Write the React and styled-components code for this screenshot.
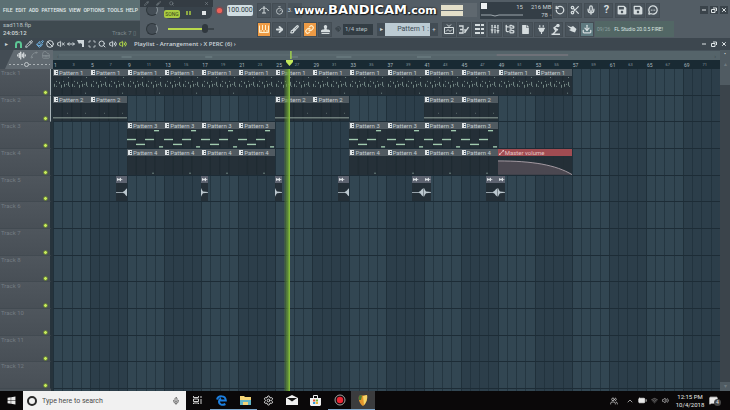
import React from 'react'
import styled, { createGlobalStyle } from 'styled-components'
import {
  ArrowRight, AudioLines, Ban, BatteryMedium, Brush, ChevronUp, Download, FolderTree,
  Link, Magnet, MessageCircleMore, MessageSquare, Mic, MoveHorizontal, Paintbrush, Pencil,
  Piano, RotateCcw, Scan, Scissors, Search, Settings, SlidersVertical, Spline,
  Timer, Users, Volume2, VolumeX, Wifi, X,
} from 'lucide-react'
import { FaFile, FaPlug, FaSave, FaStamp, FaWindows } from 'react-icons/fa'

const BARS = 72
const every = (from, to) => {
  const list = []
  for (let bar = from; bar <= to; bar += 4) list.push(bar)
  return list
}
const patterns = (name, type, bars) => bars.map((bar) => ({ name, type, bar, length: 4 }))
const fadeIn = (bar) => ({ type: 'fadeIn', bar, length: 1.25 })
const fadeOut = (bar) => ({ type: 'fadeOut', bar, length: 0.75 })

const tracks = [
  patterns('Pattern 1', 'hats', every(1, 53)),
  patterns('Pattern 2', 'line', [1, 5, 25, 29, 41, 45]),
  patterns('Pattern 3', 'notes', [...every(9, 21), ...every(33, 45)]),
  [
    ...patterns('Pattern 4', 'kick', [...every(9, 21), ...every(33, 45)]),
    { name: 'Master volume', type: 'automation', bar: 49, length: 8 },
  ],
  [fadeIn(7.75), fadeOut(17), fadeOut(25), fadeIn(31.75), fadeIn(39.75), fadeOut(41), fadeIn(47.75), fadeOut(49)],
  [], [], [], [], [], [], [],
]

const menus = ['FILE', 'EDIT', 'ADD', 'PATTERNS', 'VIEW', 'OPTIONS', 'TOOLS', 'HELP']

const GlobalStyle = createGlobalStyle`
  * { box-sizing: border-box; }
  body {
    margin: 0;
    background: #2d404a;
    font-family: Roboto, 'Liberation Sans', sans-serif;
    font-size: 6px;
    line-height: 8px;
    color: #d3dadc;
  }
  button, input, select {
    margin: 0;
    padding: 0;
    border: 0;
    background: none;
    color: inherit;
    font: inherit;
  }
  svg { display: block; flex: none; }
`

const Page = styled.div`
  display: flex;
  flex-direction: column;
  min-height: 100vh;
`

const Toolbar = styled.header`
  position: relative;
  background: #535d65;
`

const Row = styled.div`
  display: flex;
  align-items: center;
  height: ${(p) => p.$height}px;
`

const MenuBar = styled.nav`
  display: flex;
  align-items: center;
  justify-content: space-between;
  align-self: stretch;
  width: 140px;
  padding: 0 2px 0 3px;
  background: #5c7073;
  font-size: 5px;
  font-weight: 500;
  color: #e2ebeb;
`

const HintPanel = styled.div`
  display: flex;
  justify-content: space-between;
  align-items: flex-end;
  width: 140px;
  height: 17px;
  padding: 0 4px 1px 3px;
  background: #3f4a50;
  color: #b9c2c5;
  span { color: #7b878b; }
  p { margin: 0; }
  b { font-weight: 500; color: #d3dadc; }
`

const KnobCell = styled.div`
  display: grid;
  place-items: center;
  width: 24px;
`

const Knob = styled.div`
  width: 12px;
  height: 12px;
  border: 1px solid #2e363c;
  border-right-color: #8a949a;
  border-radius: 50%;
  background: #444d55;
`

const SongPanel = styled.div`
  display: grid;
  grid-template-columns: repeat(3, 1fr);
  align-items: end;
  justify-items: center;
  width: 48px;
  height: 17px;
  padding-bottom: 1px;
  border-radius: 0 0 6px 6px;
  background: #38424a;
`

const SongButton = styled.button`
  height: 8px;
  padding: 0 1px;
  border-radius: 2px;
  background: #a9cb42;
  color: #35431a;
  font-size: 5px;
`

const PlainButton = styled.button`
  display: grid;
  place-items: center;
  min-width: ${(p) => p.$width || 0}px;
  color: ${(p) => p.$color || 'inherit'};
`

const Tempo = styled.input`
  width: 26px;
  height: 11px;
  margin: 0 3px 0 1px;
  border-radius: 2px;
  background: #d0dde2;
  color: #2c3940;
  font-size: 7px;
  text-align: center;
`

const Volume = styled.input.attrs({ type: 'range' })`
  appearance: none;
  width: 46px;
  height: 10px;
  margin: 0 42px 0 4px;
  &::-webkit-slider-runnable-track {
    height: 2px;
    background: linear-gradient(90deg, #b9d94c 84%, #3b444a 84%);
  }
  &::-webkit-slider-thumb {
    appearance: none;
    width: 6px;
    height: 9px;
    margin-top: -4px;
    border-radius: 3px;
    background: #30383e;
  }
`

const ButtonGroup = styled.div`
  display: grid;
  grid-template-columns: repeat(${(p) => p.$count}, 1fr);
  justify-items: center;
  width: ${(p) => p.$width}px;
`

const ToolButton = styled.button`
  display: grid;
  place-items: center;
  width: 14px;
  height: 15px;
  border: 1px solid #444d54;
  background: ${(p) => (p.$on ? '#ee9b45' : p.$teal ? '#5f7a80' : '#49535b')};
  color: ${(p) => (p.$on ? '#fff0cd' : '#d5dcde')};
`

const Countdown = styled.button`
  width: 14px;
  height: 15px;
  background: #49535b;
  text-align: left;
`

const HelpMark = styled.b`
  font-size: 11px;
`

const Meter = styled.div`
  display: grid;
  gap: 1px;
  align-content: center;
  width: 36px;
  height: 14px;
  margin-right: 3px;
  background: #5f686f;
  div { height: 5px; width: 62%; background: #e3dfc9; }
`

const Cpu = styled.div`
  display: grid;
  grid-template-columns: 1fr auto;
  width: 72px;
  height: 17px;
  padding: 1px 3px 0 1px;
  background: #343e46;
  text-align: right;
  white-space: nowrap;
  color: #c9d1d4;
`

const CpuGraph = styled.div`
  display: grid;
  grid-template-columns: 6px 1fr;
  padding-right: 8px;
  svg { grid-column: 1 / -1; }
`

const CpuBox = styled.div`
  height: 6px;
  background: #eef1f2;
`

const WindowButtons = styled.div`
  display: flex;
  gap: 2px;
  margin-left: auto;
  padding-right: 2px;
  color: #dfe5e7;
`

const WindowButton = styled.button`
  display: grid;
  place-items: center;
  width: 8px;
  height: 8px;
  background: ${(p) => (p.$flat ? 'none' : '#3a434a')};
`

const StepSelect = styled.select`
  appearance: none;
  width: 30px;
  height: 11px;
  margin-right: 4px;
  padding-left: 2px;
  background: #333d44;
  color: #b7c0c4;
`

const PatternPicker = styled.div`
  display: flex;
  width: 61px;
  height: 13px;
  margin-right: 3px;
  background: #424c54;
`

const PatternName = styled.button`
  flex: 1;
  padding-right: 1px;
  background: #bccbd3;
  color: #3b4a54;
  font-size: 7px;
  text-align: right;
`

const News = styled.div`
  display: flex;
  align-items: center;
  gap: 4px;
  width: 79px;
  height: 16px;
  padding: 0 2px;
  background: #526765;
  font-size: 5px;
  white-space: nowrap;
  color: #dbe6e2;
  span { color: #8fa1a2; }
`

const CaptureBar = styled.div`
  position: absolute;
  top: 0;
  left: 140px;
  display: flex;
  justify-content: space-around;
  align-items: center;
  width: 73px;
  height: 7px;
  background: #343c43;
  color: #949da2;
`

const Watermark = styled.div`
  position: absolute;
  top: 3px;
  left: 294px;
  font-family: 'DejaVu Sans', sans-serif;
  font-weight: bold;
  font-size: 11px;
  line-height: 13px;
  color: #fff;
  text-shadow: 0 0 2px #000, 1px 1px 1px #1c2226;
  b { font-size: 13px; }
`

const TitleBar = styled.div`
  display: flex;
  align-items: center;
  height: 12px;
  background: #3d474f;
  color: #ced6da;
`

const Tools = styled.div`
  display: grid;
  grid-template-columns: repeat(${(p) => p.$count}, 1fr);
  justify-items: center;
  width: ${(p) => p.$width}px;
`

const Title = styled.h1`
  margin: 0 0 0 6px;
  font: inherit;
  font-family: 'Open Sans', sans-serif;
  font-weight: 600;
`

const Playlist = styled.main`
  flex: 1;
  display: grid;
  grid-template-columns: 53px 1fr 10px;
  grid-template-rows: 10px 9px 1fr;
`

const Corner = styled.div`
  grid-row: span 2;
  display: grid;
  grid-template-rows: 10px 9px;
  align-items: center;
  background: linear-gradient(115deg, #434c54 12px, #616a71 13px);
`

const CornerTools = styled.div`
  display: flex;
  justify-content: flex-end;
  align-items: center;
  gap: 4px;
  padding-right: 3px;
  color: #8c959a;
`

const ZoomSlider = styled.input.attrs({ type: 'range' })`
  appearance: none;
  width: 41px;
  height: 6px;
  margin-left: 9px;
  &::-webkit-slider-runnable-track {
    height: 1px;
    background: repeating-linear-gradient(90deg, #aab1b5 0 2px, transparent 2px 4px);
  }
  &::-webkit-slider-thumb {
    appearance: none;
    width: 5px;
    height: 5px;
    margin-top: -2px;
    border: 1px solid #c0c7ca;
    border-radius: 50%;
    background: #616a71;
  }
`

const Overview = styled.div`
  display: flex;
  align-items: center;
  justify-content: space-between;
  padding: 0 4px;
  border-top: 1px solid #46525a;
  background: #55646a;
  color: #39464d;
`

const OverviewMap = styled.svg`
  flex: 1;
  width: 0;
  height: 9px;
`

const Ruler = styled.div`
  position: relative;
  display: grid;
  grid-template-columns: repeat(${BARS / 2}, minmax(0, 1fr));
  align-items: center;
  background: #192a33;
`

const BarNumber = styled.span`
  padding-left: 1px;
  font-size: ${(p) => (p.$major ? 5 : 4)}px;
  color: ${(p) => (p.$major ? '#a9b8bf' : '#84959d')};
`

const Marker = styled.svg`
  position: absolute;
  left: 35%;
  top: 0;
  fill: #c3e85a;
`

const Headers = styled.div`
  display: grid;
  grid-auto-rows: 1fr;
  padding-bottom: 2px;
  border-right: 2px solid #26333b;
  background: #495158;
`

const TrackHeader = styled.label`
  display: flex;
  flex-direction: column;
  justify-content: space-between;
  padding: 0 1px 0 1px;
  border-right: 1px solid ${(p) => (p.$selected ? '#aab5b9' : '#26333b')};
  border-bottom: 1px solid #424a51;
  background: linear-gradient(#4f565d, #484f56);
  color: #747c83;
`

const Led = styled.input.attrs({ type: 'checkbox' })`
  appearance: none;
  align-self: flex-end;
  width: 5px;
  height: 5px;
  margin-right: 1px;
  border: 1px solid #5c7339;
  border-radius: 50%;
  background: #5a6350;
  &:checked { background: #c8ec5c; }
`

const Lanes = styled.div`
  position: relative;
  display: grid;
  grid-auto-rows: minmax(0, 1fr);
  padding-bottom: 2px;
  background:
    repeating-linear-gradient(90deg, #20303a 0 1px, transparent 1px calc(100% / 18)),
    repeating-linear-gradient(90deg, rgba(28, 44, 54, 0.6) 0 1px, transparent 1px calc(100% / ${BARS})),
    repeating-linear-gradient(90deg, #324652 0 calc(100% / 18), #2c3e4a calc(100% / 18) calc(100% / 9));
`

const Lane = styled.div`
  display: grid;
  grid-template-columns: repeat(${BARS * 4}, minmax(0, 1fr));
  grid-template-rows: minmax(0, 1fr);
  border-bottom: 1px solid #1d2c36;
`

const ClipBox = styled.div`
  grid-row: 1;
  grid-column: ${(p) => (p.$bar - 1) * 4 + 1} / span ${(p) => p.$length * 4};
  display: flex;
  flex-direction: column;
  min-width: 0;
  overflow: hidden;
  background: rgba(35, 46, 52, 0.88);
  color: #a2cbb0;
  > svg { flex: 1 1 0; width: 100%; height: 0; min-height: 0; }
`

const ClipTitle = styled.div`
  display: flex;
  align-items: center;
  gap: 1px;
  height: 7px;
  padding-left: 1px;
  line-height: 7px;
  white-space: nowrap;
  background: ${(p) => (p.$type === 'automation' ? '#a14c52' : p.$type.startsWith('fade') ? '#5d6370' : '#505a61')};
  color: ${(p) => (p.$type === 'automation' ? '#e3c4c4' : '#c3cbce')};
`

const Playhead = styled.div`
  position: absolute;
  top: 0;
  bottom: 0;
  left: 34.7%;
  width: 6px;
  background: linear-gradient(90deg, rgba(96, 150, 50, 0.15), rgba(100, 150, 50, 0.8) 60%, #8cc63c);
`

const ScrollBar = styled.div`
  grid-row: 2 / span 2;
  grid-column: 3;
  display: flex;
  flex-direction: column;
  justify-content: space-between;
  background: #3b444b;
  color: #6e797f;
`

const ScrollThumb = styled.div`
  height: ${(p) => p.$height}px;
  background: #505b62;
  text-align: center;
`

const Taskbar = styled.footer`
  display: flex;
  align-items: stretch;
  height: 19px;
  background: #0a0809;
  color: #e8e8e8;
`

const SearchBox = styled.label`
  display: flex;
  align-items: center;
  gap: 5px;
  width: 163px;
  padding: 0 6px 0 4px;
  background: #f1f1f1;
  color: #333;
`

const SearchInput = styled.input`
  flex: 1;
  min-width: 0;
  font-size: 7px;
  &::placeholder { color: #4b4b4b; opacity: 1; }
`

const Ring = styled.span`
  width: 10px;
  height: 10px;
  border: 2px solid #2a2a2a;
  border-radius: 50%;
`

const Apps = styled.div`
  display: grid;
  grid-template-columns: repeat(8, 1fr);
  width: 189px;
`

const AppButton = styled.button`
  display: grid;
  place-items: center;
  border-bottom: 1px solid ${(p) => (p.$open ? '#7fa8cc' : 'transparent')};
  background: ${(p) => (p.$active ? '#3b3c3e' : 'none')};
`

const Tray = styled.div`
  display: flex;
  align-items: center;
  gap: 4px;
  margin-left: auto;
`

const Clock = styled.time`
  width: 30px;
  margin-left: 2px;
  text-align: center;
`

const Notifications = styled.button`
  position: relative;
  margin-right: 12px;
`

const Badge = styled.span`
  position: absolute;
  left: 5px;
  top: 3px;
  width: 7px;
  height: 7px;
  border-radius: 50%;
  background: #474747;
  font-size: 5px;
  line-height: 7px;
`

function hatMarks() {
  const marks = []
  for (let i = 0; i < 2; i++) {
    const x = i * 18
    marks.push([x + 1, 8, 1, 3], [x + 3, 5, 1, 1], [x + 3, 10, 1, 1], [x + 6, 6, 1, 2], [x + 8, 9, 1, 3],
      [x + 10, 5, 1, 1], [x + 11, 8, 1, 3], [x + 13, 8, 1, 1], [x + 15, 6, 1, 4], [x + 16, 10, 1, 1])
  }
  marks.push([15, 1, 1, 1], [33, 1, 1, 1], [32, 17, 1, 1])
  return marks
}

const shapes = {
  hats: hatMarks(),
  line: [[0, 14.6, 37, 1], [14, 10, 0.6, 0.8], [32, 10, 0.6, 0.8]],
  notes: [[0, 10, 9, 1.4], [9, 15, 9, 1.4], [18, 10, 9, 1.4], [27, 1, 5, 1.4], [32, 17.5, 4, 1.4]],
  kick: [[25, 17, 2, 1]],
}

const shapeColors = { hats: '#768a87', line: '#94a69d', kick: '#6f8580' }

function ClipBody({ type }) {
  if (type === 'automation') {
    return (
      <svg viewBox="0 0 74 19" preserveAspectRatio="none">
        <path d="M0 5C34 5 58 9 74 19H0Z" fill="#4b4851" />
        <path d="M0 5C34 5 58 9 74 19" fill="none" stroke="#bdb1b8" strokeWidth="0.8" />
      </svg>
    )
  }
  if (type === 'fadeIn') {
    return (
      <svg viewBox="0 0 12 19" preserveAspectRatio="none">
        <path d="M0 9.2H7L9 8L10 6.5L12 5V14L10 12.5L9 11L7 9.8H0Z" fill="#bcc8cf" />
      </svg>
    )
  }
  if (type === 'fadeOut') {
    return (
      <svg viewBox="0 0 7 19" preserveAspectRatio="none">
        <path d="M0 5L1 7L2 8.6L7 9.2V9.8L2 10.4L1 12L0 14Z" fill="#bcc8cf" />
      </svg>
    )
  }
  return (
    <svg viewBox="0 0 37 19" preserveAspectRatio="none" fill={shapeColors[type] || 'currentColor'}>
      <path d="M9.2 0V19M18.5 0V19M27.7 0V19" stroke="#1b272d" strokeWidth="0.5" />
      {shapes[type].map(([x, y, w, h]) => (
        <rect key={`${x}-${y}`} x={x} y={y} width={w} height={h} />
      ))}
    </svg>
  )
}

function ClipIcon({ type }) {
  if (type === 'automation') {
    return (
      <svg width="5" height="5" viewBox="0 0 5 5" fill="#e3c4c4">
        <path d="M0 3.5H1.5V5H0ZM3.5 0H5V1.5H3.5ZM1 3.5L3.5 1L4 1.5L1.5 4Z" />
      </svg>
    )
  }
  if (type.startsWith('fade')) {
    return (
      <svg width="6" height="5" viewBox="0 0 6 5" fill="#dce2e5">
        <path d="M0 1L2 2L4 0.5V2L6 2.5L4 3V4.5L2 3L0 4Z" />
      </svg>
    )
  }
  return (
    <svg width="4" height="5" viewBox="0 0 4 5">
      <rect width="4" height="5" fill="#dfe4e6" />
      <path d="M2 1H3.4V2H2ZM2 3H3.4V4H2Z" fill="#38434a" />
    </svg>
  )
}

function Clip({ name, type, bar, length }) {
  return (
    <ClipBox $bar={bar} $length={length}>
      <ClipTitle $type={type}>
        <ClipIcon type={type} />
        {name}
      </ClipTitle>
      <ClipBody type={type} />
    </ClipBox>
  )
}

function PianoRollIcon() {
  return (
    <svg width="10" height="8" viewBox="0 0 10 8" fill="none" stroke="currentColor">
      <path d="M0.5 0.5V7.5H9.5V0.5M3.5 0V5M6.5 0V5M2 5V7M5 5V7M8 5V7" />
    </svg>
  )
}

function StepsIcon() {
  return (
    <svg width="9" height="10" viewBox="0 0 9 10" fill="currentColor">
      <path d="M0 0H5V2H0ZM6 0H9V2H6ZM0 4H5V6H0ZM6 4H9V6H6ZM0 8H5V10H0ZM6 8H9V10H6Z" />
    </svg>
  )
}

function PlaylistIcon() {
  return (
    <svg width="10" height="10" viewBox="0 0 10 10" fill="none" stroke="currentColor">
      <path d="M0.5 3.5H9.5V9.5H0.5ZM2 7.5L4 5.5L6 7.5L8 5.5M3 0.5L5 2.5L7 0.5" />
    </svg>
  )
}

function NotesIcon() {
  return (
    <svg width="10" height="9" viewBox="0 0 10 9" fill="none" stroke="currentColor" strokeWidth="1.3">
      <path d="M0 1H4V8H0M1 4.5H4M5.5 8L9.5 2M6 4V8" />
    </svg>
  )
}

function TapperIcon() {
  return (
    <svg width="10" height="11" viewBox="0 0 10 11" fill="none" stroke="currentColor" strokeWidth="1.4">
      <path d="M7 1L3 4L5 7L2 10M3 4L7 6M0.5 10.3H9" />
      <circle cx="7" cy="1.6" r="1" fill="currentColor" />
    </svg>
  )
}

function TouchIcon() {
  return (
    <svg width="10" height="8" viewBox="0 0 10 8" fill="currentColor">
      <path d="M0 0.5L4 2L6 1L9.5 4L8 7.5L5 6.5L2 5L4 4Z" />
    </svg>
  )
}

function SliceIcon() {
  return (
    <svg width="8" height="8" viewBox="0 0 8 8" fill="currentColor">
      <path d="M0 0H7V7H5V4L3 3L2 4Z" />
    </svg>
  )
}

function WindowControls({ flat }) {
  return (
    <WindowButtons>
      <WindowButton $flat={flat} aria-label="Minimize">
        <svg width="4" height="4" viewBox="0 0 4 4"><path d="M0 2H4" stroke="currentColor" /></svg>
      </WindowButton>
      <WindowButton $flat={flat} aria-label="Restore">
        <svg width="6" height="6" viewBox="0 0 6 6" fill="none" stroke="currentColor">
          <path d="M2 1H5.5V4M0.5 2.5H4V5.5H0.5Z" />
        </svg>
      </WindowButton>
      <WindowButton $flat={flat} aria-label="Close"><X size={6} strokeWidth={4} /></WindowButton>
    </WindowButtons>
  )
}

const fileTools = [
  ['Undo', RotateCcw], ['Cut', Scissors], ['Record', Mic], ['Help', null], ['Save', FaSave],
  ['Save new version', FaSave], ['Chat', MessageCircleMore],
]

const windowTools = [
  ['Playlist', PlaylistIcon], ['Piano roll', NotesIcon], ['Channel rack', StepsIcon], ['Mixer', SlidersVertical],
  ['Browser', FolderTree], ['Picker', FaFile], ['Plugins', FaPlug], ['Tempo tapper', TapperIcon], ['Touch', TouchIcon],
  ['Downloads', Download],
]

const playlistTools = [
  ['Draw', Pencil], ['Paint', Paintbrush], ['Delete', Ban], ['Mute', VolumeX], ['Slip', MoveHorizontal],
  ['Slice', SliceIcon], ['Select', Scan], ['Zoom', Search], ['Playback', Volume2],
]

function TopRow() {
  return (
    <Row $height={20}>
      <MenuBar>
        {menus.map((menu) => <button key={menu}>{menu}</button>)}
      </MenuBar>
      <KnobCell><Knob /></KnobCell>
      <SongPanel>
        <SongButton>SONG</SongButton>
        <PlainButton aria-label="Pause" $color="#a9cb42">
          <svg width="5" height="8" viewBox="0 0 5 8"><path d="M1 1V5M4 1V5" stroke="currentColor" strokeWidth="1.5" /></svg>
        </PlainButton>
        <PlainButton aria-label="Stop" $color="#dfe4e6">
          <svg width="4" height="8" viewBox="0 0 4 8"><path d="M0 1H4V5H0Z" fill="currentColor" /></svg>
        </PlainButton>
      </SongPanel>
      <PlainButton aria-label="Record" $width={14}>
        <svg width="9" height="9" viewBox="0 0 9 9">
          <circle cx="4.5" cy="4.5" r="4" fill="#7a4e54" />
          <circle cx="4.5" cy="4.5" r="2.6" fill="#ed6259" />
        </svg>
      </PlainButton>
      <Tempo aria-label="Tempo" defaultValue="100.000" />
      <ButtonGroup $count={12} $width={185}>
        <ToolButton aria-label="Metronome">
          <svg width="10" height="8" viewBox="0 0 10 8" fill="none" stroke="currentColor">
            <path d="M0.5 5C2 1 8 1 9.5 5M5 0V7M3 7H7" />
          </svg>
        </ToolButton>
        <ToolButton aria-label="Wait for input"><Timer size={9} /></ToolButton>
        <Countdown aria-label="Countdown">3.</Countdown>
      </ButtonGroup>
      <Meter><div /><div /></Meter>
      <Cpu>
        <CpuGraph>
          <CpuBox />
          <span>15</span>
          <svg width="42" height="6" viewBox="0 0 42 6" fill="none" stroke="#b9c2c6">
            <path d="M0 3H10L14 4L18 3H42" strokeWidth="0.8" />
          </svg>
        </CpuGraph>
        <div>216 MB<br />78 ◦</div>
      </Cpu>
      <ButtonGroup $count={7} $width={109}>
        {fileTools.map(([label, Icon]) => (
          <ToolButton key={label} aria-label={label}>
            {Icon ? <Icon size={10} strokeWidth={Icon === FaSave ? 0 : 3} /> : <HelpMark>?</HelpMark>}
          </ToolButton>
        ))}
      </ButtonGroup>
      <WindowControls />
    </Row>
  )
}

function SecondRow() {
  return (
    <Row $height={18}>
      <HintPanel>
        <p>sad118.flp<br /><b>24:05:12</b></p>
        <span>Track 7 ▯</span>
      </HintPanel>
      <KnobCell><Knob /></KnobCell>
      <Volume aria-label="Main volume" defaultValue="84" />
      <ButtonGroup $count={5} $width={77}>
        <ToolButton $on aria-label="Typing keyboard"><PianoRollIcon /></ToolButton>
        <ToolButton aria-label="Step edit"><ArrowRight size={9} strokeWidth={5} /></ToolButton>
        <ToolButton aria-label="Slide"><Brush size={9} strokeWidth={3} /></ToolButton>
        <ToolButton $on aria-label="Link"><Link size={9} strokeWidth={3} /></ToolButton>
        <ToolButton aria-label="Stamp"><FaStamp size={9} /></ToolButton>
      </ButtonGroup>
      <PlainButton aria-label="Snap" $width={10} $color="#2f383e"><Magnet size={6} strokeWidth={3} /></PlainButton>
      <StepSelect aria-label="Snap size">
        <option>1/4 step</option>
      </StepSelect>
      <PatternPicker>
        <PlainButton aria-label="Previous pattern" $width={8}>▸</PlainButton>
        <PatternName>Pattern 1 :</PatternName>
        <PlainButton aria-label="Add pattern" $width={8}>+</PlainButton>
      </PatternPicker>
      <ButtonGroup $count={10} $width={154}>
        {windowTools.map(([label, Icon]) => (
          <ToolButton key={label} $teal={label === 'Downloads'} aria-label={label}>
            {Icon === FaFile || Icon === FaPlug ? <Icon size={9} /> : <Icon size={10} strokeWidth={3} />}
          </ToolButton>
        ))}
      </ButtonGroup>
      <News><span>09/26</span>FL Studio 20.0.5 FIRE!</News>
    </Row>
  )
}

function PlaylistTitle() {
  return (
    <TitleBar>
      <Tools $count={2} $width={24}>
        <button aria-label="Options">▸</button>
        <PlainButton aria-label="Snap to grid" $color="#5cc795">
          <svg width="7" height="7" viewBox="0 0 7 7" fill="none" stroke="currentColor" strokeWidth="2">
            <path d="M1 7V3.5C1 0.2 6 0.2 6 3.5V7" />
          </svg>
        </PlainButton>
      </Tools>
      <Tools $count={9} $width={94}>
        {playlistTools.map(([label, Icon]) => (
          <PlainButton key={label} aria-label={label} $color={label === 'Paint' ? '#71b4e4' : undefined}>
            <Icon size={8} strokeWidth={3} />
          </PlainButton>
        ))}
      </Tools>
      <Tools $count={1} $width={10}>
        <PlainButton aria-label="Audition" $color="#b4dc48"><Volume2 size={8} strokeWidth={3} /></PlainButton>
      </Tools>
      <Title>Playlist - Arrangement › X PERC (6) ›</Title>
      <WindowControls flat />
    </TitleBar>
  )
}

function TaskbarRow() {
  return (
    <Taskbar>
      <PlainButton aria-label="Start" $width={23}><FaWindows size={9} /></PlainButton>
      <SearchBox>
        <Ring />
        <SearchInput aria-label="Search" placeholder="Type here to search" />
        <Mic size={8} />
      </SearchBox>
      <Apps>
        <AppButton aria-label="Task view">
          <svg width="9" height="8" viewBox="0 0 9 8" fill="none" stroke="currentColor">
            <path d="M0.5 0V1.5H5.5V0M0.5 3H5.5V5.5H0.5ZM0.5 8V7H5.5V8M8 0V2M8 3V8" strokeWidth="0.9" />
          </svg>
        </AppButton>
        <AppButton $open aria-label="Edge">
          <svg width="11" height="11" viewBox="0 0 11 11" fill="none" stroke="#1c7fe0" strokeWidth="2">
            <path d="M1 4.5C2 0.5 9.5 -0.2 9.8 5.6H3.5M9.4 9C6.5 10.6 3 9.8 3 6.6C3 5 3.8 4 5 3.4" />
          </svg>
        </AppButton>
        <AppButton $open aria-label="File Explorer">
          <svg width="11" height="9" viewBox="0 0 11 9">
            <path d="M0 0H4L5 1H11V9H0Z" fill="#f5d577" />
            <path d="M0 4H11V9H8V6H3V9H0Z" fill="#62b5c6" />
          </svg>
        </AppButton>
        <AppButton aria-label="Settings"><Settings size={11} strokeWidth={2} /></AppButton>
        <AppButton aria-label="Mail">
          <svg width="12" height="10" viewBox="0 0 12 10">
            <path d="M0 3L6 0L12 3V10H0Z" fill="#f1f1f1" />
            <path d="M1 3H11L6 6.5Z" fill="#151515" />
          </svg>
        </AppButton>
        <AppButton aria-label="Store">
          <svg width="11" height="11" viewBox="0 0 11 11">
            <path d="M3.5 3V0.5H7.5V3" fill="none" stroke="#eee" />
            <path d="M0 3H11V10L10 11H1L0 10Z" fill="#f1f1f1" />
            <path d="M3 4.5H5.2V6.5H3Z" fill="#e2573b" />
            <path d="M5.8 4.5H8V6.5H5.8Z" fill="#73b43c" />
            <path d="M3 7H5.2V9H3Z" fill="#359ddd" />
            <path d="M5.8 7H8V9H5.8Z" fill="#ecb533" />
          </svg>
        </AppButton>
        <AppButton $open aria-label="Bandicam">
          <svg width="12" height="12" viewBox="0 0 12 12">
            <circle cx="6" cy="6" r="5" fill="#16090b" stroke="#c8c8c8" strokeWidth="0.8" />
            <circle cx="6" cy="6" r="3.2" fill="#ea2634" />
          </svg>
        </AppButton>
        <AppButton $open $active aria-label="FL Studio">
          <svg width="10" height="12" viewBox="0 0 10 12">
            <path d="M1 2C3 1 5 2 9 1C10 6 7 11 5 12C2 10 0 6 1 2Z" fill="#e3952c" />
            <path d="M5 2L9 1C10 6 7 10 6 11Z" fill="#f5d568" />
            <path d="M1 2C2 1 3 1 4 2L3 6L1 6Z" fill="#4d7b34" />
          </svg>
        </AppButton>
      </Apps>
      <Tray>
        <Users size={8} />
        <i />
        <ChevronUp size={8} />
        <BatteryMedium size={9} fill="currentColor" />
        <Wifi size={7} color="#a5a5a5" />
        <Volume2 size={7} />
        <Clock>12:15 PM<br />10/4/2018</Clock>
        <Notifications aria-label="Notifications">
          <MessageSquare size={9} fill="currentColor" />
          <Badge>4</Badge>
        </Notifications>
      </Tray>
    </Taskbar>
  )
}

function App() {
  const numbers = Array.from({ length: BARS / 2 }, (_, i) => i * 2 + 1)
  return (
    <Page>
      <GlobalStyle />
      <Toolbar>
        <TopRow />
        <SecondRow />
        <CaptureBar><Pencil size={5} /><Brush size={5} /><Search size={5} /><i /><i /><i /><X size={5} /></CaptureBar>
        <Watermark>www.<b>BANDICAM</b>.com</Watermark>
      </Toolbar>
      <PlaylistTitle />
      <Playlist>
        <Corner>
          <CornerTools>
            <AudioLines size={9} color="#e3e7e9" strokeWidth={3} />
            <Spline size={8} />
            <Piano size={8} />
          </CornerTools>
          <ZoomSlider aria-label="Zoom" defaultValue="42" />
        </Corner>
        <Overview>
          ‹
          <OverviewMap viewBox="0 0 650 9" preserveAspectRatio="none">
            <path d="M62 6H72M145 6H152M230 6H237M275 6H290M355 6H369" stroke="#75858a" />
            <path d="M0 4H434" stroke="#606f74" />
            <path d="M434 4H505" stroke="#877f85" />
            <path d="M230 0V8" stroke="#9fd04e" strokeWidth="1.5" />
          </OverviewMap>
          ›
        </Overview>
        <ScrollThumb $height={10}>•</ScrollThumb>
        <Ruler>
          {numbers.map((n) => <BarNumber key={n} $major={n % 4 === 1}>{n}</BarNumber>)}
          <Marker width="7" height="6" viewBox="0 0 7 6"><path d="M0 0H7V2L3.5 6L0 2Z" /></Marker>
        </Ruler>
        <Headers>
          {tracks.map((_, i) => (
            <TrackHeader key={i} $selected={i < 2}>
              Track {i + 1}
              <Led defaultChecked />
            </TrackHeader>
          ))}
        </Headers>
        <Lanes>
          {tracks.map((clips, i) => (
            <Lane key={i}>
              {clips.map((clip) => <Clip key={clip.bar} {...clip} />)}
            </Lane>
          ))}
          <Playhead />
        </Lanes>
        <ScrollBar>
          <ScrollThumb $height={25}>▴</ScrollThumb>
          <ScrollThumb $height={9}>▾</ScrollThumb>
        </ScrollBar>
      </Playlist>
      <TaskbarRow />
    </Page>
  )
}

export default App
